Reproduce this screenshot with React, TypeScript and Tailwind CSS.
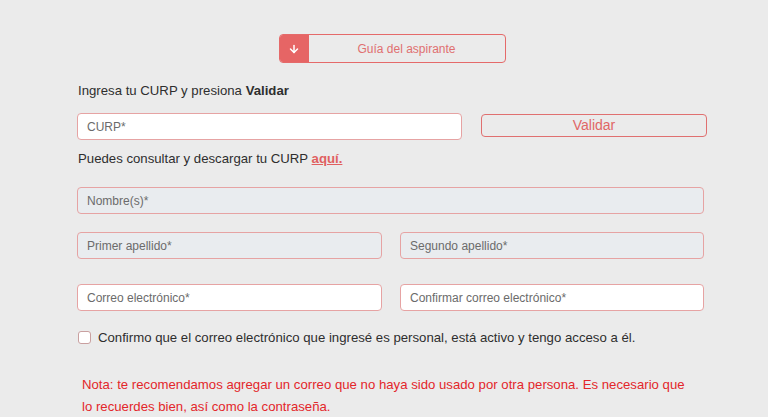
import { ArrowDown } from "lucide-react";

function Field({ label, gray, className = "" }: { label: string; gray?: boolean; className?: string }) {
	return (
		<div
			className={`flex h-[27px] items-center rounded-[4px] border border-[#e6a3a3] px-[9px] text-[12px] text-[#6b6b6b] ${
				gray ? "bg-[#e9ecef]" : "bg-white"
			} ${className}`}
		>
			{label}
		</div>
	);
}

export default function App() {
	return (
		<div className="h-[417px] w-[768px] overflow-hidden bg-[#ebebeb] font-['Liberation_Sans',Arial,sans-serif]">
			<div className="ml-[77px] w-[630px] pt-[34px]">
				<div className="flex justify-center">
					<div className="flex h-[29px] w-[227px] overflow-hidden rounded-[4px] border border-[#e56a6a]">
						<div className="flex w-[29px] items-center justify-center bg-[#e66565]">
							<ArrowDown className="h-[12px] w-[12px] text-white" strokeWidth={3} />
						</div>
						<div className="flex flex-1 items-center justify-center text-[12px] text-[#e07070]">
							Guía del aspirante
						</div>
					</div>
				</div>

				<p className="mt-[19px] pl-[1px] text-[13.2px] leading-[17px] text-[#2e2e2e]">
					Ingresa tu CURP y presiona <b>Validar</b>
				</p>

				<div className="mt-[14px] flex items-start">
					<Field label="CURP*" className="w-[385px]" />
					<button className="ml-[19px] mt-[1px] flex h-[23px] w-[226px] items-center justify-center rounded-[4px] border border-[#e07070] text-[14px] text-[#e06666]">
						Validar
					</button>
				</div>

				<p className="mt-[10px] pl-[1px] text-[13.2px] leading-[17px] text-[#2e2e2e]">
					Puedes consultar y descargar tu CURP{" "}
					<a className="font-bold text-[#e06060] underline">aquí.</a>
				</p>

				<div className="mt-[20px] w-[627px]">
					<Field label="Nombre(s)*" gray />
					<div className="mt-[18px] flex gap-[18px]">
						<Field label="Primer apellido*" gray className="w-[305px]" />
						<Field label="Segundo apellido*" gray className="w-[304px]" />
					</div>
					<div className="mt-[25px] flex gap-[18px]">
						<Field label="Correo electrónico*" className="w-[305px]" />
						<Field label="Confirmar correo electrónico*" className="w-[304px]" />
					</div>
				</div>

				<label className="mt-[17px] flex items-center pl-[1px] text-[13.2px] text-[#2e2e2e]">
					<span className="h-[13px] w-[13px] rounded-[3px] border border-[#c9a0a0] bg-white" />
					<span className="ml-[7px]">
						Confirmo que el correo electrónico que ingresé es personal, está activo y tengo acceso a él.
					</span>
				</label>

				<p className="mt-[26px] w-[615px] pl-[5px] text-[13.2px] leading-[22px] text-[#e3262a]">
					Nota: te recomendamos agregar un correo que no haya sido usado por otra persona. Es necesario que lo
					recuerdes bien, así como la contraseña.
				</p>
			</div>
		</div>
	);
}
